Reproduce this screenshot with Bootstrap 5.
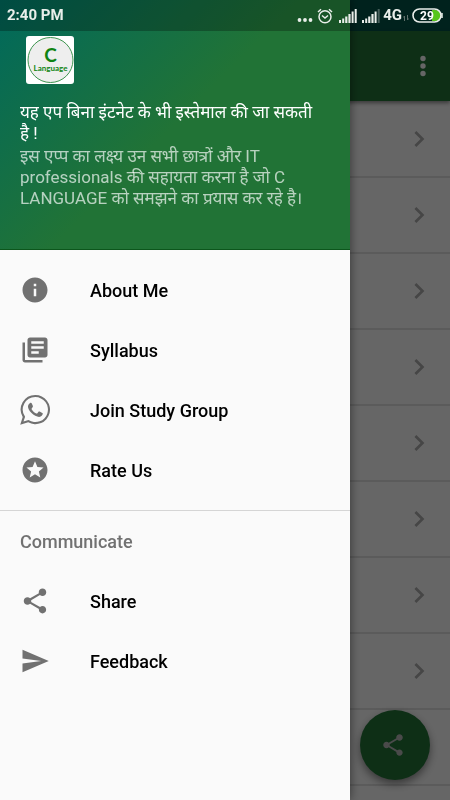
<!DOCTYPE html>
<html lang="hi">
<head>
<meta charset="utf-8">
<meta name="viewport" content="width=device-width, initial-scale=1">
<title>C Language</title>
<link href="https://cdn.jsdelivr.net/npm/bootstrap@5.3.0/dist/css/bootstrap.min.css" rel="stylesheet">
<style>
body{font-family:Roboto,"Noto Sans",sans-serif;background:#fff;min-height:100vh;overflow:hidden}
.status-space{height:31px;background:#00554a}
.app-bar{height:70px;background:#237539;box-shadow:0 2px 4px rgba(0,0,0,.45);position:relative}
.topic{height:76px;border:0;border-bottom:2px solid #e3e3e3;border-radius:0;background:#fff;color:#aeaeae;padding-right:15px}
.topic-list{padding-top:1px}
.fab,.fab:hover{width:70px;height:70px;right:20px;bottom:20px;background:#237539;border:0;color:#bababa;box-shadow:0 4px 8px rgba(0,0,0,.45)}
.offcanvas-backdrop.show{opacity:.6;transition:none}
.offcanvas.drawer{--bs-offcanvas-width:350px;width:350px;background:#fafafa;border:0;box-shadow:0 0 10px rgba(0,0,0,.5);color:#000;transition:none}
.drawer-head{height:250px;background:linear-gradient(135deg,#00695c 0%,#217336 50%,#217336 100%);border-bottom:1px solid #0c561c}
.head-strip{height:31px;background:rgba(0,0,0,.27)}
.logo-box{width:48px;height:48px;margin-top:5px;margin-left:26px}
.logo-text{font-family:Lato,sans-serif;font-weight:700;fill:#108413}
.head-text{font-size:17px;line-height:21px;padding:18px 30px 0 20px}
.head-title{color:#fff;margin-bottom:2px}
.head-note{color:rgba(255,255,255,.68)}
.menu-item{height:60px;padding:0 20px;gap:40px;font-size:18px;font-weight:500;color:#000;text-decoration:none}
.menu-item svg{width:30px;height:30px;fill:#717171;flex:none}
.menu-top{padding:10px 0}
.divider{height:1px;background:#d5d5d5}
.group-name{font-size:18px;font-weight:500;line-height:58px;color:#717171;padding:2px 20px 0}
.status-bar{height:31px;z-index:1060;color:#e9eeea;font-size:15px;font-weight:700;padding:0 7px}
.status-dots{margin-right:4px}
.status-alarm{margin-right:6px}
.status-signal{margin-right:5px}
.status-signal-end{margin-right:3px}
.status-arrows{margin:4px 3px 0 1px}
</style>
<script src="https://cdn.jsdelivr.net/npm/bootstrap@5.3.0/dist/js/bootstrap.bundle.min.js"></script>
</head>
<body>
<svg class="d-none" aria-hidden="true">
<symbol id="share" viewBox="0 0 24 24"><path d="M18 16.08c-.76 0-1.44.3-1.96.77L8.91 12.7c.05-.23.09-.46.09-.7s-.04-.47-.09-.7l7.05-4.11c.54.5 1.25.81 2.04.81 1.66 0 3-1.34 3-3s-1.34-3-3-3-3 1.34-3 3c0 .24.04.47.09.7L8.04 9.81C7.5 9.31 6.79 9 6 9c-1.66 0-3 1.34-3 3s1.34 3 3 3c.79 0 1.5-.31 2.04-.81l7.12 4.16c-.05.21-.08.43-.08.65 0 1.61 1.31 2.92 2.92 2.92s2.92-1.31 2.92-2.92-1.31-2.92-2.92-2.92z"/></symbol>
<symbol id="chevron" viewBox="0 0 24 24"><path d="M8.59 16.59L13.17 12 8.59 7.41 10 6l6 6-6 6z"/></symbol>
<symbol id="signal" viewBox="0 0 18 14"><path d="M0 11h2v3H0zM3.2 9.5h2V14h-2zM6.2 7.5h2.2V14H6.200zM9.400 5h2.200v9H9.400zM12.600 2.500h2V14h-2z"/></symbol>
</svg>

<header>
  <div class="status-space"></div>
  <div class="app-bar d-flex align-items-center justify-content-end">
    <button type="button" class="btn p-0 border-0 me-2 pe-1" aria-label="More options">
      <svg class="d-block" width="30" height="30" viewBox="0 0 30 30" fill="#fff"><circle cx="15" cy="7.500" r="2.700"/><circle cx="15" cy="15" r="2.700"/><circle cx="15" cy="22.500" r="2.700"/></svg>
    </button>
  </div>
</header>

<main class="topic-list">
  <button type="button" class="topic d-flex w-100 align-items-center justify-content-end" aria-label="Topic 1"><svg width="32" height="32" fill="currentColor"><use href="#chevron"/></svg></button>
  <button type="button" class="topic d-flex w-100 align-items-center justify-content-end" aria-label="Topic 2"><svg width="32" height="32" fill="currentColor"><use href="#chevron"/></svg></button>
  <button type="button" class="topic d-flex w-100 align-items-center justify-content-end" aria-label="Topic 3"><svg width="32" height="32" fill="currentColor"><use href="#chevron"/></svg></button>
  <button type="button" class="topic d-flex w-100 align-items-center justify-content-end" aria-label="Topic 4"><svg width="32" height="32" fill="currentColor"><use href="#chevron"/></svg></button>
  <button type="button" class="topic d-flex w-100 align-items-center justify-content-end" aria-label="Topic 5"><svg width="32" height="32" fill="currentColor"><use href="#chevron"/></svg></button>
  <button type="button" class="topic d-flex w-100 align-items-center justify-content-end" aria-label="Topic 6"><svg width="32" height="32" fill="currentColor"><use href="#chevron"/></svg></button>
  <button type="button" class="topic d-flex w-100 align-items-center justify-content-end" aria-label="Topic 7"><svg width="32" height="32" fill="currentColor"><use href="#chevron"/></svg></button>
  <button type="button" class="topic d-flex w-100 align-items-center justify-content-end" aria-label="Topic 8"><svg width="32" height="32" fill="currentColor"><use href="#chevron"/></svg></button>
  <button type="button" class="topic d-flex w-100 align-items-center justify-content-end" aria-label="Topic 9"><svg width="32" height="32" fill="currentColor"><use href="#chevron"/></svg></button>
</main>

<button type="button" class="fab btn rounded-circle position-fixed p-0 d-flex align-items-center justify-content-center" aria-label="Share app">
  <svg class="me-1" width="26" height="26" fill="currentColor"><use href="#share"/></svg>
</button>

<aside class="offcanvas offcanvas-start show drawer" tabindex="-1" aria-label="Navigation">
  <div class="drawer-head">
    <div class="head-strip"></div>
    <div class="logo-box">
      <svg class="d-block" width="48" height="48" viewBox="0 0 48 48" role="img" aria-label="C Language logo">
        <rect width="48" height="48" rx="3" fill="#fff"/>
        <circle cx="24.500" cy="24" r="22.500" fill="#eee" stroke="#3f9550" stroke-width="1"/>
        <text class="logo-text" text-anchor="middle"><tspan x="24.500" y="26" font-size="19">C</tspan><tspan x="24.500" y="35" font-size="8">Language</tspan></text>
      </svg>
    </div>
    <div class="head-text">
      <div class="head-title">यह एप बिना इंटनेट के भी इस्तेमाल की जा सकती है !</div>
      <div class="head-note">इस एप्प का लक्ष्य उन सभी छात्रों और IT professionals की सहायता करना है जो C LANGUAGE को समझने का प्रयास कर रहे है।</div>
    </div>
  </div>
  <nav>
    <div class="menu-top">
      <a href="#about" class="menu-item d-flex align-items-center"><svg viewBox="0 0 24 24"><path d="M12 2C6.480 2 2 6.480 2 12s4.480 10 10 10 10-4.480 10-10S17.520 2 12 2zm1 15h-2v-6h2v6zm0-8h-2V7h2v2z"/></svg>About Me</a>
      <a href="#syllabus" class="menu-item d-flex align-items-center"><svg viewBox="0 0 24 24"><path d="M4 6H2v14c0 1.100.9 2 2 2h14v-2H4V6zm16-4H8c-1.100 0-2 .9-2 2v12c0 1.100.9 2 2 2h12c1.100 0 2-.9 2-2V4c0-1.100-.9-2-2-2zm-1 9H9V9h10v2zm-4 4H9v-2h6v2zm4-8H9V5h10v2z"/></svg>Syllabus</a>
      <a href="#group" class="menu-item d-flex align-items-center"><svg viewBox="0 0 30 30"><path d="M15.300 0A14.600 14.600 0 0 0 2.700 22L.2 29.800l8-2.500A14.600 14.600 0 1 0 15.300 0zm0 2.100a12.500 12.500 0 1 1-6.800 22.900l-5 1.600 1.600-4.800A12.500 12.500 0 0 1 15.300 2.100z"/><path d="M9.900 8.200c.5-.5 1.500-.6 1.900.2l1.100 2.700c.2.600-.1 1-.5 1.500l-.7.8c-.3.300-.3.600-.1.900 1.100 1.900 2.600 3.300 4.700 4.200.4.200.7.100.9-.1l1.300-1.600c.3-.4.700-.4 1.100-.2l2.700 1.300c.4.200.5.400.5.700-.1 2-1.600 3.200-3.600 3.300-2 .1-5.500-1.500-7.900-4.100-2-2.100-3.500-4.500-3.300-6.500.1-1.300.9-2.400 1.900-3.100z"/></svg>Join Study Group</a>
      <a href="#rate" class="menu-item d-flex align-items-center"><svg viewBox="0 0 24 24"><path d="M11.990 2C6.470 2 2 6.480 2 12s4.470 10 9.990 10C17.520 22 22 17.520 22 12S17.520 2 11.990 2zm4.240 16L12 15.450 7.770 18l1.120-4.810-3.730-3.230 4.920-.42L12 5l1.920 4.530 4.920.42-3.730 3.230L16.230 18z"/></svg>Rate Us</a>
    </div>
    <div class="divider"></div>
    <div class="group-name">Communicate</div>
    <a href="#share-app" class="menu-item d-flex align-items-center"><svg><use href="#share"/></svg>Share</a>
    <a href="#feedback" class="menu-item d-flex align-items-center"><svg viewBox="0 0 24 24"><path d="M2.010 21L23 12 2.010 3 2 10l15 2-15 2z"/></svg>Feedback</a>
  </nav>
</aside>

<div class="status-bar fixed-top d-flex align-items-center justify-content-between">
  <span>2:40 PM</span>
  <div class="d-flex align-items-center">
    <svg class="status-dots" width="16" height="16" viewBox="0 0 16 16" fill="currentColor"><circle cx="2.500" cy="12" r="1.900"/><circle cx="8" cy="12" r="1.900"/><circle cx="13.500" cy="12" r="1.900"/></svg>
    <svg class="status-alarm" width="16" height="16" viewBox="0 0 16 16" fill="none" stroke="currentColor" stroke-width="1.500"><circle cx="8" cy="8.700" r="6"/><path d="M1 4l3-2.800M15 4l-3-2.800M5 7.500l3 2.500 3-2.500"/></svg>
    <svg class="status-signal" width="18" height="14" viewBox="0 0 18 14" fill="currentColor"><use href="#signal"/><path d="M15.700 0h2v14h-2z"/></svg>
    <svg class="status-signal-end" width="18" height="14" viewBox="0 0 18 14" fill="currentColor"><use href="#signal"/><path d="M15.700 0h2v14h-2z" opacity=".3"/></svg>
    <span>4G</span>
    <svg class="status-arrows" width="6" height="8" viewBox="0 0 6 8" fill="none" stroke="#61716c"><path d="M1.500 7V2L.3 3.500M4.500 1v5l1.200-1.500"/></svg>
    <svg width="31" height="15" viewBox="0 0 31 15" role="img" aria-label="Battery 29 percent"><path d="M20 2h3.500a5.500 5.500 0 0 1 0 11H20z" fill="#56c51b"/><rect x="1" y="1" width="28" height="13" rx="6.500" fill="none" stroke="#e9eeea" stroke-width="1.600"/><path d="M30 5v5" stroke="#e9eeea" stroke-width="1.500"/><text x="15" y="12" text-anchor="middle" font-size="12" font-weight="700" fill="#fff">29</text></svg>
  </div>
</div>
</body>
</html>
